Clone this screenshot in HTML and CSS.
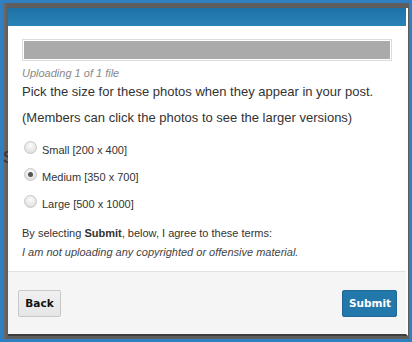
FILE: index.html
```html
<!DOCTYPE html>
<html>
<head>
<meta charset="utf-8">
<link rel="stylesheet" href="styles.css">
</head>
<body>
<div class="frame">
  <div class="backdrop">
    <span class="bg-letter">S</span>
    <div class="modal">
      <div class="modal-header"></div>
      <div class="modal-body">
        <div class="progress"><div class="progress-bar"></div></div>
        <div class="status">Uploading 1 of 1 file</div>
        <p class="lead">Pick the size for these photos when they appear in your post.</p>
        <p class="lead note">(Members can click the photos to see the larger versions)</p>
        <div class="options">
          <label class="option"><span class="radio"></span>Small [200 x 400]</label>
          <label class="option"><span class="radio checked"></span>Medium [350 x 700]</label>
          <label class="option"><span class="radio"></span>Large [500 x 1000]</label>
        </div>
        <p class="terms">By selecting <b>Submit</b>, below, I agree to these terms:</p>
        <p class="terms-text">I am not uploading any copyrighted or offensive material.</p>
      </div>
      <div class="modal-footer">
        <button class="btn btn-back">Back</button>
        <button class="btn btn-submit">Submit</button>
      </div>
    </div>
  </div>
</div>
</body>
</html>
```

FILE: styles.css
```css
html, body {
  margin: 0;
  padding: 0;
  width: 412px;
  height: 342px;
  overflow: hidden;
}
body {
  font-family: "Liberation Sans", Arial, sans-serif;
  color: #333;
}
.frame {
  box-sizing: border-box;
  width: 412px;
  height: 342px;
  border: 3px solid #2f7fc1;
  background: #2f7fc1;
}
.backdrop {
  position: relative;
  height: 100%;
  background: linear-gradient(to right, #6d6d6d 0, #5d5d5d 5px, #5d5d5d 100%);
  padding: 5px 1px 3px 5px;
  box-sizing: border-box;
  display: flex;
}
.bg-letter {
  position: absolute;
  left: 0;
  top: 146px;
  font-size: 16px;
  color: #3a2a2a;
}
.modal {
  position: relative;
  flex: 1;
  display: flex;
  flex-direction: column;
  background: #fff;
  border-right: 2px solid #fff;
  border-bottom: 2px solid #3c3c3c;
}
.modal-header {
  height: 18px;
  background: linear-gradient(to bottom, #1c72a6, #2a83b7);
}
.modal-body {
  flex: 1;
  padding: 13px 14px 0 14px;
}
.progress {
  height: 22px;
  border: 1px solid #dcdcdc;
  padding: 1px;
  box-sizing: border-box;
}
.progress-bar {
  height: 100%;
  background: #aaaaaa;
}
.status {
  margin-top: 5px;
  font-size: 11px;
  font-style: italic;
  color: #888;
  line-height: 14px;
}
.lead {
  margin: 3px 0 0;
  font-size: 13px;
  line-height: 18px;
  color: #333;
  white-space: nowrap;
}
.lead.note {
  margin-top: 8px;
}
.options {
  margin-top: 16px;
  display: flex;
  flex-direction: column;
  gap: 12px;
}
.option {
  display: flex;
  align-items: center;
  font-size: 11px;
  line-height: 15px;
  color: #333;
}
.radio {
  width: 11px;
  height: 11px;
  border-radius: 50%;
  border: 1px solid #c8c8c8;
  background: radial-gradient(circle at 50% 35%, #fcfcfc 0, #e8e8e8 55%, #d6d6d6 100%);
  margin: 0 5px 0 2px;
  position: relative;
  top: -3px;
  flex: none;
}
.radio.checked::after {
  content: "";
  position: absolute;
  left: 3px;
  top: 3px;
  width: 5px;
  height: 5px;
  border-radius: 50%;
  background: #555;
}
.terms {
  margin: 14px 0 0;
  font-size: 11px;
  line-height: 15px;
  color: #333;
}
.terms b { color: #333; }
.terms-text {
  margin: 4px 0 0;
  font-size: 11px;
  line-height: 15px;
  font-style: italic;
  color: #444;
}
.modal-footer {
  height: 62px;
  border-top: 1px solid #e2e2e2;
  background: #f5f5f5;
  display: flex;
  align-items: center;
  justify-content: space-between;
  padding: 0 9px 0 10px;
}
.btn {
  font-family: "DejaVu Sans", Verdana, sans-serif;
  font-weight: bold;
  font-size: 10.5px;
  height: 27px;
  border-radius: 2px;
  cursor: pointer;
}
.btn-back {
  width: 43px;
  background: linear-gradient(#f0f0f0, #e6e6e6);
  border: 1px solid #c8c8c8;
  color: #111;
}
.btn-submit {
  width: 55px;
  background: #2378ab;
  border: 1px solid #1f6796;
  color: #fff;
}
```
